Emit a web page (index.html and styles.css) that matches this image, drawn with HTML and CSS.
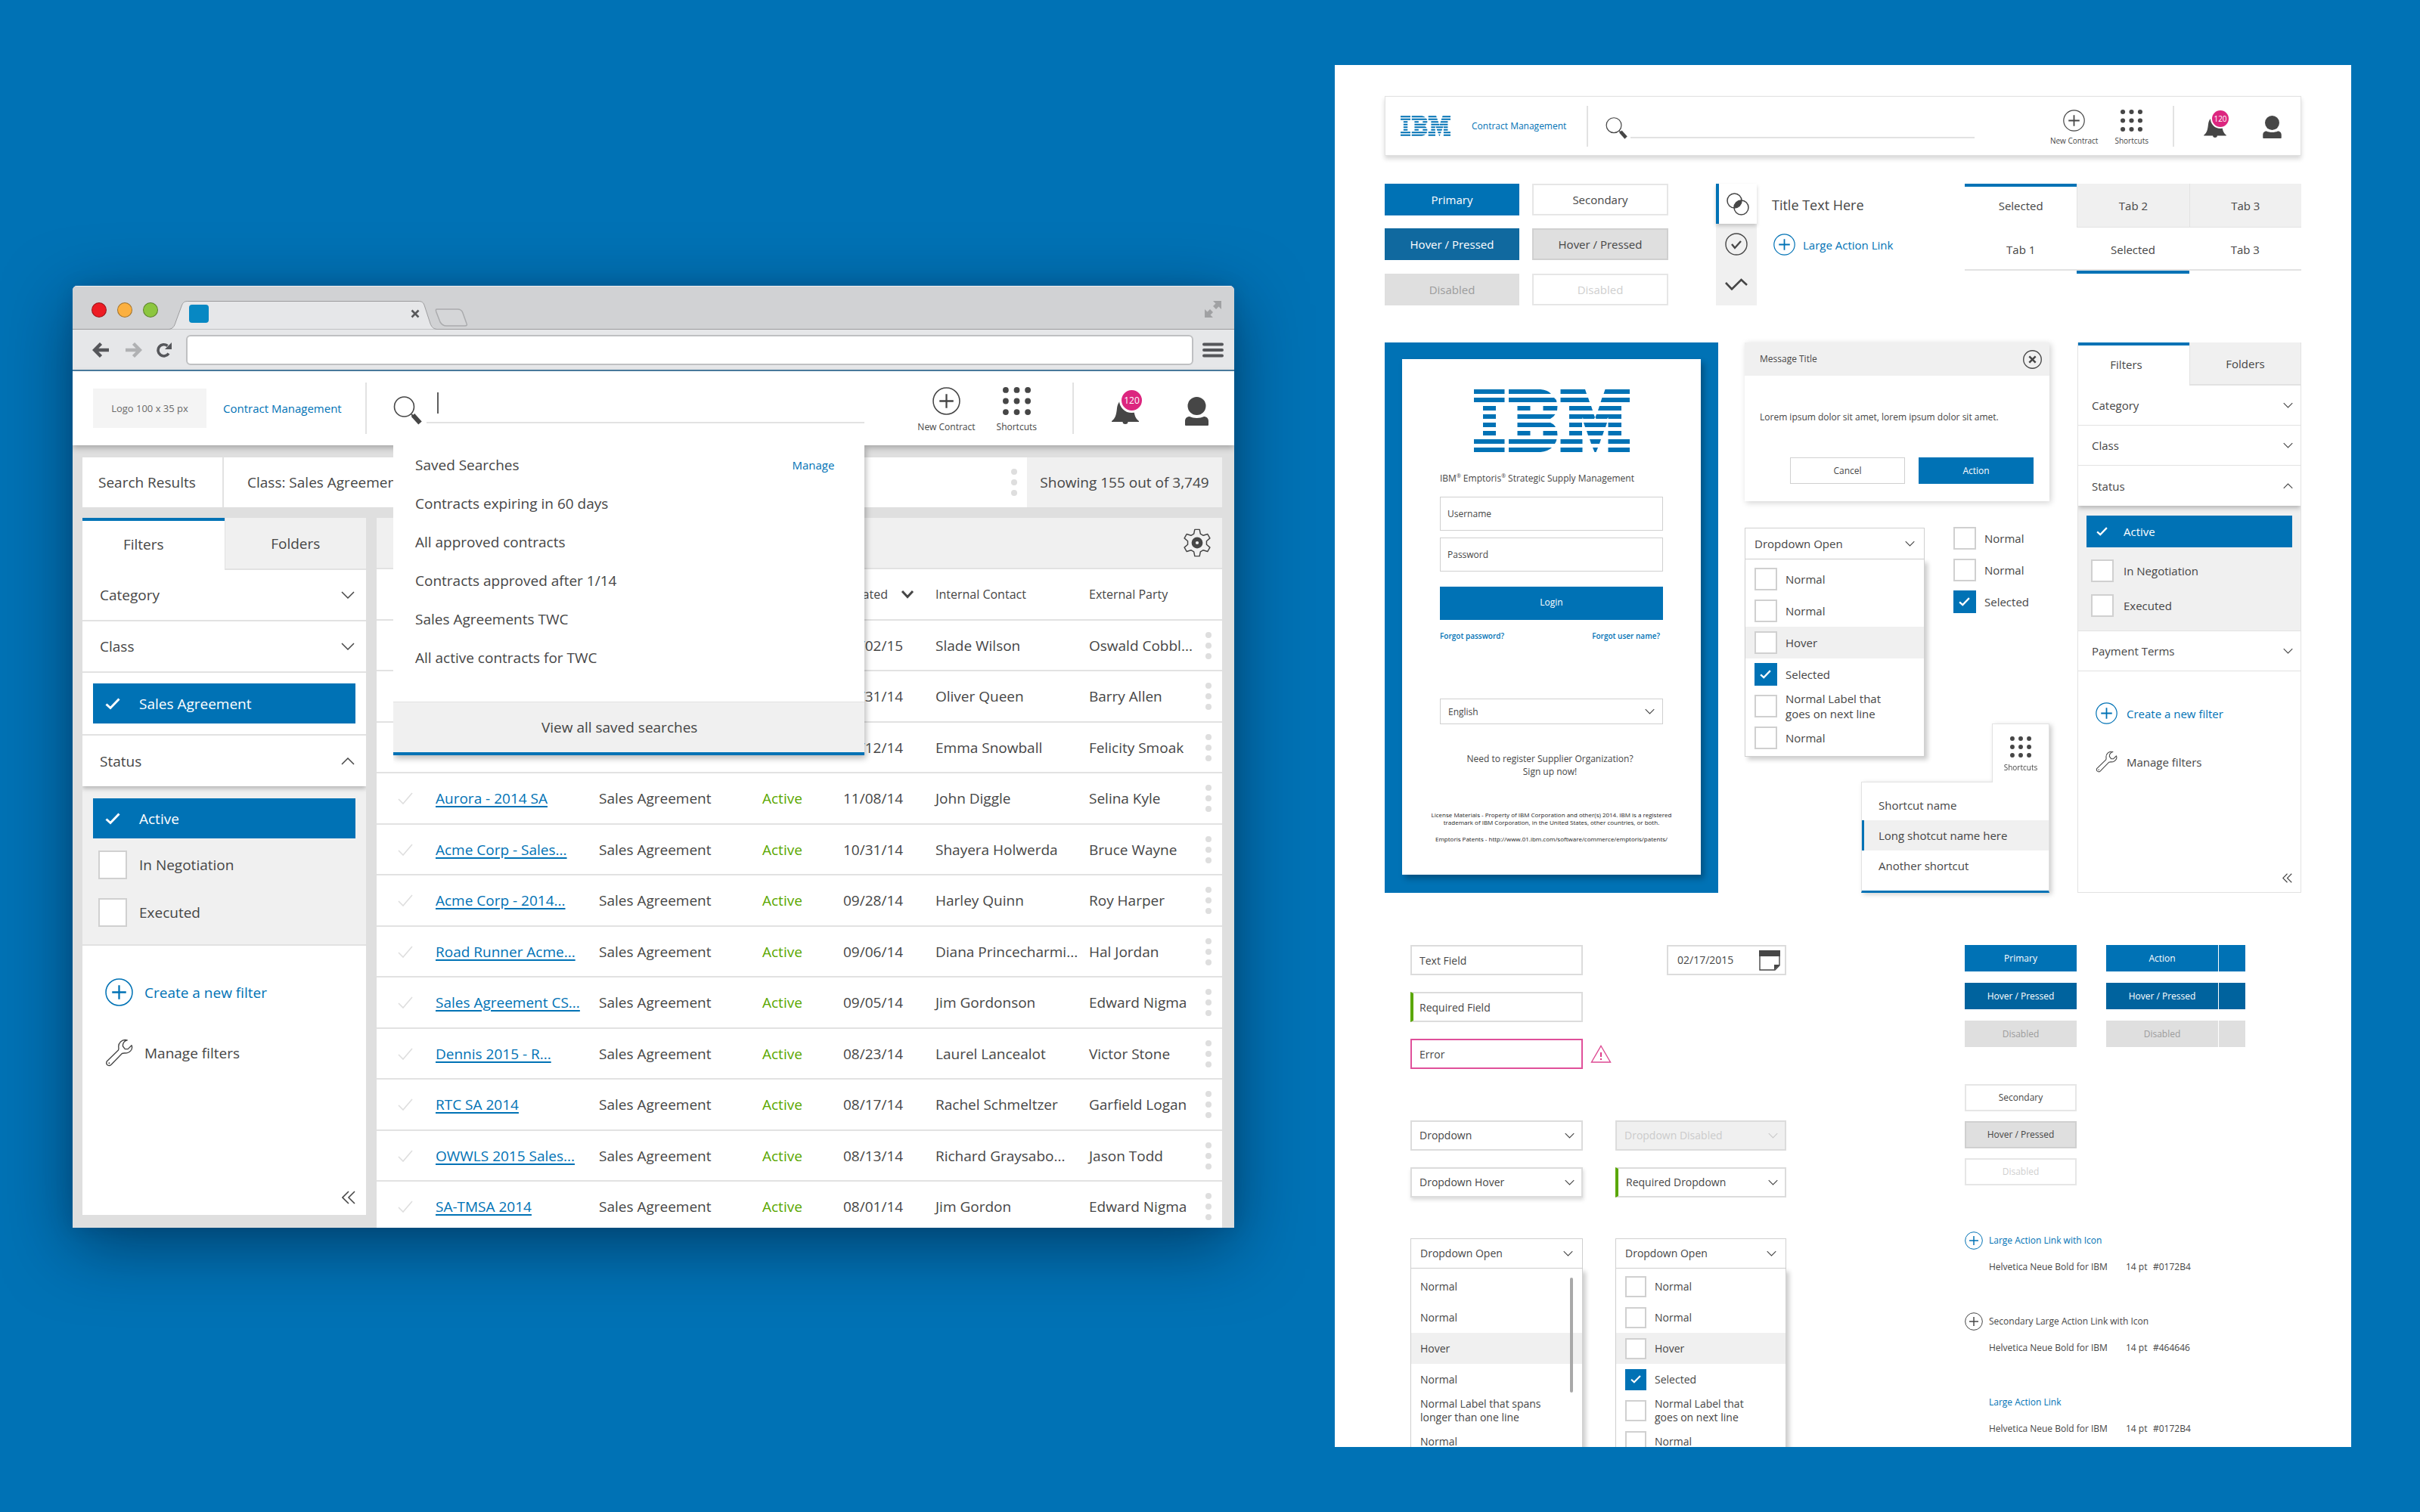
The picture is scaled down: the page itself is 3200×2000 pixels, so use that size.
FILE: index.html
```html
<!DOCTYPE html>
<html lang="en">
<head>
<meta charset="utf-8">
<title>Contract Management UI kit</title>
<link rel="stylesheet" href="styles.css">
</head>
<body>
<svg class="defs" aria-hidden="true">
  <symbol id="i-plus" viewBox="0 0 36 36"><circle cx="18" cy="18" r="17" fill="none" stroke="currentColor" stroke-width="1.5"/><path d="M18 9v18M9 18h18" fill="none" stroke="currentColor" stroke-width="2.2"/></symbol>
  <symbol id="i-grid" viewBox="0 0 38 38"><g fill="currentColor"><circle cx="4" cy="4" r="4"/><circle cx="19" cy="4" r="4"/><circle cx="34" cy="4" r="4"/><circle cx="4" cy="19" r="4"/><circle cx="19" cy="19" r="4"/><circle cx="34" cy="19" r="4"/><circle cx="4" cy="34" r="4"/><circle cx="19" cy="34" r="4"/><circle cx="34" cy="34" r="4"/></g></symbol>
  <symbol id="i-search" viewBox="0 0 38 38"><circle cx="14.500" cy="14" r="13" fill="none" stroke="currentColor" stroke-width="1.6"/><path d="M24 24l3 3" stroke="currentColor" stroke-width="2"/><path d="M26 25l9.500 10.500" stroke="currentColor" stroke-width="6"/></symbol>
  <symbol id="i-bell" viewBox="0 0 36 34"><path fill="currentColor" d="M0 30C5 26 6 22 7 13C8 5 12 1 18 1S28 5 29 13C30 22 31 26 36 30V31H21.500a3.500 3 0 0 1-7 0H0Z"/></symbol>
  <symbol id="i-user" viewBox="0 0 31 38"><ellipse cx="15.500" cy="12" rx="12" ry="12" fill="currentColor"/><path fill="currentColor" d="M0 37V32c0-4 3-6 6-6c5 2.500 14 2.500 19 0c3 0 6 2 6 6v5a1 1 0 0 1-1 1H1a1 1 0 0 1-1-1Z"/></symbol>
  <symbol id="i-down" viewBox="0 0 18 10"><path d="M1 1l8 8l8-8" fill="none" stroke="currentColor" stroke-width="1.5"/></symbol>
  <symbol id="i-up" viewBox="0 0 18 10"><path d="M1 9l8-8l8 8" fill="none" stroke="currentColor" stroke-width="1.5"/></symbol>
  <symbol id="i-collapse" viewBox="0 0 18 18"><path d="M9 1L1 9l8 8M17 1L9 9l8 8" fill="none" stroke="currentColor" stroke-width="1.6"/></symbol>
  <symbol id="i-tick" viewBox="0 0 20 16"><path d="M1 9l6 6L19 1" fill="none" stroke="currentColor" stroke-width="1.6"/></symbol>
  <symbol id="i-wrench" viewBox="0 0 38 38"><path d="M30 2C26 3 24 6 24 10L27 14h4L36 9C38 14 34 20 26 19.500L23 20L8 35.500C5 38 0 35 2.500 30.500L18 15.500L18.500 13C17 6 23 0 30 2Z" fill="none" stroke="currentColor" stroke-width="1.4" stroke-linejoin="round"/><circle cx="5.500" cy="33" r="1" fill="currentColor"/></symbol>
  <symbol id="i-gear" viewBox="-18 -18 36 36"><path d="M-3-16.700L3-16.700L4.100-11.300L7.700-9.200L13-10.900L16-5.800L11.800-2.100V2.100L16 5.800L13 10.900L7.700 9.200L4.100 11.300L3 16.700H-3L-4.100 11.300L-7.700 9.200L-13 10.900L-16 5.800L-11.800 2.100V-2.100L-16-5.800L-13-10.900L-7.700-9.200L-4.100-11.300Z" fill="none" stroke="currentColor" stroke-width="1.4" stroke-linejoin="round"/><circle r="4.500" fill="none" stroke="currentColor" stroke-width="5"/></symbol>
  <symbol id="i-more" viewBox="0 0 8 36"><g fill="#dedede"><circle cx="4" cy="4" r="4"/><circle cx="4" cy="18" r="4"/><circle cx="4" cy="32" r="4"/></g></symbol>
  <symbol id="i-venn" viewBox="0 0 30 30"><g fill="none" stroke="currentColor" stroke-width="1.500"><circle cx="10.500" cy="10.500" r="9.500"/><circle cx="19.500" cy="19.500" r="9.500"/></g><path fill="currentColor" d="M19.800 10.100A9.500 9.500 0 0 1 10.200 19.800A9.500 9.500 0 0 1 19.800 10.100Z"/></symbol>
  <symbol id="i-okay" viewBox="0 0 30 30"><circle cx="15" cy="15" r="14" fill="none" stroke="currentColor" stroke-width="1.400"/><path d="M9 15l4 5l8-9" fill="none" stroke="currentColor" stroke-width="2.400"/></symbol>
  <symbol id="i-trend" viewBox="0 0 30 16"><path d="M1 6l8 8.500L21.500 2L29 9" fill="none" stroke="currentColor" stroke-width="2.600"/></symbol>
  <symbol id="i-close" viewBox="0 0 24 24"><circle cx="12" cy="12" r="11.300" fill="none" stroke="currentColor" stroke-width="1.300"/><path d="M8 8l8 8M16 8l-8 8" fill="none" stroke="currentColor" stroke-width="2.400"/></symbol>
  <symbol id="i-ibm" viewBox="0 0 206 83"><path fill="#0072b5" d="M0 0H40.500V6H0ZM0 11H40.500V17H0ZM12 22H29V28H12ZM12 33H29V39H12ZM12 44H29V50H12ZM12 55H29V61H12ZM0 66H40.500V72H0ZM0 77H40.500V83H0Z
    M46 0H88Q98 1 102 6H46ZM46 11H106Q109 13 109.500 17H46ZM57.500 22H74.500V28H57.500ZM91.500 22H110.500L110 28H91.500ZM57.500 33H107.500Q106 36 101 39H57.500ZM57.500 44H101Q106 46 108 50H57.500ZM57.500 55H74.500V61H57.500ZM91.500 55H110L110.500 61H91.500ZM46 66H109.500Q109 69 107 72H46ZM46 77H103Q98 82 88 83H46Z
    M114.500 0H147L149 6H114.500ZM114.500 11H151L153 17H114.500ZM126 22H155L157 28H126ZM126 33H158.500L160 37L159 39H144.500L143.500 37V39H126ZM126 44H143V50H126ZM126 55H143V61H126ZM114.500 66H143.500V72H114.500ZM114.500 77H143.500V83H114.500Z
    M206 0H173.500L171.500 6H206ZM206 11H169.500L167.500 17H206ZM195 22H166L164 28H195ZM195 33H162L160.500 37L161.500 39H176L177.500 37V39H195ZM195 44H177.500V50H195ZM195 55H177.500V61H195ZM206 66H177.500V72H206ZM206 77H177.500V83H206Z
    M145 44H176L174 50H147ZM149 55H172L170 61H151ZM153 66H168L166 72H155ZM157 77H164L161.500 83H159.500Z"/></symbol>
</svg>

<main class="stage">
  <section class="window" aria-label="Contract search">
    <div class="tabstrip">
      <div class="lights"><i class="light light-red"></i><i class="light light-amber"></i><i class="light light-green"></i></div>
      <div class="browser-tab">
        <svg class="tab-shape" viewBox="0 0 354 38" width="354" height="38"><path d="M0 37.500C6 36 7 32 9 26L16 7C18 1.500 20 .5 25 .5H329C334 .5 336 2 337.500 7L345 30C347 35 349 37 354 37.500" fill="#e6e7e9" stroke="#9c9c9e"/></svg>
        <div class="tab-content"><i class="favicon"></i><button class="tab-close" aria-label="Close tab"><svg width="12" height="12" viewBox="0 0 12 12"><path d="M1.500 1.500l9 9M10.500 1.500l-9 9" stroke="#58595b" stroke-width="2.600"/></svg></button></div>
      </div>
      <svg class="new-tab" viewBox="0 0 44 24" width="44" height="24"><path d="M3 1H30C34 1 36 3 37 6L42 20C43 22 42 23 40 23H15C11 23 9 21 7 18L2 5C1 2 1 1 3 1Z" fill="#d5d6d8" stroke="#aaabad" stroke-width="1.500"/></svg>
      <svg class="fullscreen" viewBox="0 0 24 24" width="24" height="24"><path fill="#a0a1a3" d="M12 1H23V12L19.500 8.500L16 12L12 8L15.500 4.500ZM12 23H1V12L4.500 15.500L8 12L12 16L8.500 19.500Z"/></svg>
    </div>
    <div class="toolbar">
      <button class="nav-btn" aria-label="Back"><svg width="24" height="20" viewBox="0 0 24 20"><path d="M22 10H3M11.500 1.500L3 10l8.500 8.500" fill="none" stroke="#55565a" stroke-width="4.400"/></svg></button>
      <button class="nav-btn" aria-label="Forward"><svg width="24" height="20" viewBox="0 0 24 20"><path d="M2 10H21M12.500 1.500L21 10l-8.500 8.500" fill="none" stroke="#b0b1b3" stroke-width="4.400"/></svg></button>
      <button class="nav-btn" aria-label="Reload"><svg width="22" height="20" viewBox="0 0 22 20"><path d="M17 14.500A7.600 7.600 0 1 1 15.500 4.500" fill="none" stroke="#55565a" stroke-width="3.600"/><path d="M21 0V9H12Z" fill="#55565a"/></svg></button>
      <input class="address" type="text" aria-label="Address">
      <button class="nav-btn" aria-label="Menu"><svg width="28" height="20" viewBox="0 0 28 20"><path d="M2 2.500H26M2 10H26M2 17.500H26" stroke="#55565a" stroke-width="4" stroke-linecap="round"/></svg></button>
    </div>

    <header class="appbar">
      <div class="brand"><span class="logo-box">Logo 100 x 35 px</span><a href="#" class="product">Contract Management</a></div>
      <div class="search">
        <svg class="search-icon"><use href="#i-search"/></svg>
        <span class="search-field"><i class="caret"></i><input type="text" aria-label="Search contracts"></span>
        <div class="saved">
          <div class="saved-list">
            <div class="saved-head"><span>Saved Searches</span><a href="#">Manage</a></div>
            <a href="#">Contracts expiring in 60 days</a>
            <a href="#">All approved contracts</a>
            <a href="#">Contracts approved after 1/14</a>
            <a href="#">Sales Agreements TWC</a>
            <a href="#">All active contracts for TWC</a>
          </div>
          <a href="#" class="saved-all">View all saved searches</a>
        </div>
      </div>
      <nav class="actions">
        <button class="action"><svg class="plus"><use href="#i-plus"/></svg>New Contract</button>
        <button class="action"><svg class="dots"><use href="#i-grid"/></svg>Shortcuts</button>
      </nav>
      <div class="account">
        <button class="bell" aria-label="Notifications"><svg><use href="#i-bell"/></svg><span class="badge">120</span></button>
        <button class="user" aria-label="Profile"><svg><use href="#i-user"/></svg></button>
      </div>
    </header>

    <div class="workspace">
      <div class="crumbs">
        <span class="crumb">Search Results</span>
        <span class="crumb crumb-wide">Class: Sales Agreement</span>
        <svg class="more"><use href="#i-more"/></svg>
        <span class="count">Showing 155 out of 3,749</span>
      </div>
      <div class="panes">
        <aside class="filters">
          <div class="ftabs"><button class="ftab selected">Filters</button><button class="ftab">Folders</button></div>
          <button class="acc">Category<svg class="chev"><use href="#i-down"/></svg></button>
          <button class="acc">Class<svg class="chev"><use href="#i-down"/></svg></button>
          <div class="picked"><label class="opt on"><input type="checkbox" class="cb" checked>Sales Agreement</label></div>
          <button class="acc open">Status<svg class="chev"><use href="#i-up"/></svg></button>
          <div class="opts">
            <label class="opt on"><input type="checkbox" class="cb" checked>Active</label>
            <label class="opt"><input type="checkbox" class="cb">In Negotiation</label>
            <label class="opt"><input type="checkbox" class="cb">Executed</label>
          </div>
          <div class="flinks">
            <a href="#" class="iconlink blue"><svg><use href="#i-plus"/></svg>Create a new filter</a>
            <a href="#" class="iconlink"><svg><use href="#i-wrench"/></svg>Manage filters</a>
          </div>
          <button class="collapse" aria-label="Collapse"><svg><use href="#i-collapse"/></svg></button>
        </aside>
        <div class="results">
          <div class="results-bar"><button aria-label="Settings"><svg class="gear"><use href="#i-gear"/></svg></button></div>
          <table class="grid">
            <colgroup><col class="c-tick"><col class="c-name"><col class="c-type"><col class="c-status"><col class="c-date"><col class="c-contact"><col class="c-party"><col class="c-more"></colgroup>
            <thead><tr><th></th><th></th><th></th><th></th><th><span class="sort">Created<svg width="18" height="12" viewBox="0 0 18 12"><path d="M2 2l7 7.500L16 2" fill="none" stroke="#464646" stroke-width="3"/></svg></span></th><th>Internal Contact</th><th>External Party</th><th></th></tr></thead>
            <tbody>
              <tr><td></td><td></td><td></td><td></td><td>01/02/15</td><td>Slade Wilson</td><td>Oswald Cobbl...</td><td><svg class="more"><use href="#i-more"/></svg></td></tr>
              <tr><td></td><td></td><td></td><td></td><td>12/31/14</td><td>Oliver Queen</td><td>Barry Allen</td><td><svg class="more"><use href="#i-more"/></svg></td></tr>
              <tr><td></td><td></td><td></td><td></td><td>12/12/14</td><td>Emma Snowball</td><td>Felicity Smoak</td><td><svg class="more"><use href="#i-more"/></svg></td></tr>
              <tr><td><svg class="tick"><use href="#i-tick"/></svg></td><td><a href="#">Aurora - 2014 SA</a></td><td>Sales Agreement</td><td class="live">Active</td><td>11/08/14</td><td>John Diggle</td><td>Selina Kyle</td><td><svg class="more"><use href="#i-more"/></svg></td></tr>
              <tr><td><svg class="tick"><use href="#i-tick"/></svg></td><td><a href="#">Acme Corp - Sales...</a></td><td>Sales Agreement</td><td class="live">Active</td><td>10/31/14</td><td>Shayera Holwerda</td><td>Bruce Wayne</td><td><svg class="more"><use href="#i-more"/></svg></td></tr>
              <tr><td><svg class="tick"><use href="#i-tick"/></svg></td><td><a href="#">Acme Corp - 2014...</a></td><td>Sales Agreement</td><td class="live">Active</td><td>09/28/14</td><td>Harley Quinn</td><td>Roy Harper</td><td><svg class="more"><use href="#i-more"/></svg></td></tr>
              <tr><td><svg class="tick"><use href="#i-tick"/></svg></td><td><a href="#">Road Runner Acme...</a></td><td>Sales Agreement</td><td class="live">Active</td><td>09/06/14</td><td>Diana Princecharmi...</td><td>Hal Jordan</td><td><svg class="more"><use href="#i-more"/></svg></td></tr>
              <tr><td><svg class="tick"><use href="#i-tick"/></svg></td><td><a href="#">Sales Agreement CS...</a></td><td>Sales Agreement</td><td class="live">Active</td><td>09/05/14</td><td>Jim Gordonson</td><td>Edward Nigma</td><td><svg class="more"><use href="#i-more"/></svg></td></tr>
              <tr><td><svg class="tick"><use href="#i-tick"/></svg></td><td><a href="#">Dennis 2015 - R...</a></td><td>Sales Agreement</td><td class="live">Active</td><td>08/23/14</td><td>Laurel Lancealot</td><td>Victor Stone</td><td><svg class="more"><use href="#i-more"/></svg></td></tr>
              <tr><td><svg class="tick"><use href="#i-tick"/></svg></td><td><a href="#">RTC SA 2014</a></td><td>Sales Agreement</td><td class="live">Active</td><td>08/17/14</td><td>Rachel Schmeltzer</td><td>Garfield Logan</td><td><svg class="more"><use href="#i-more"/></svg></td></tr>
              <tr><td><svg class="tick"><use href="#i-tick"/></svg></td><td><a href="#">OWWLS 2015 Sales...</a></td><td>Sales Agreement</td><td class="live">Active</td><td>08/13/14</td><td>Richard Graysabo...</td><td>Jason Todd</td><td><svg class="more"><use href="#i-more"/></svg></td></tr>
              <tr><td><svg class="tick"><use href="#i-tick"/></svg></td><td><a href="#">SA-TMSA 2014</a></td><td>Sales Agreement</td><td class="live">Active</td><td>08/01/14</td><td>Jim Gordon</td><td>Edward Nigma</td><td><svg class="more"><use href="#i-more"/></svg></td></tr>
            </tbody>
          </table>
        </div>
      </div>
    </div>
  </section>

  <section class="sheet" aria-label="Components">
    <header class="appbar small">
      <div class="brand"><svg class="ibm-mark"><use href="#i-ibm"/></svg><a href="#" class="product">Contract Management</a></div>
      <div class="search">
        <svg class="search-icon"><use href="#i-search"/></svg>
        <span class="search-field"><input type="text" aria-label="Search"></span>
      </div>
      <nav class="actions">
        <button class="action"><svg class="plus"><use href="#i-plus"/></svg>New Contract</button>
        <button class="action"><svg class="dots"><use href="#i-grid"/></svg>Shortcuts</button>
      </nav>
      <div class="account">
        <button class="bell" aria-label="Notifications"><svg><use href="#i-bell"/></svg><span class="badge">120</span></button>
        <button class="user" aria-label="Profile"><svg><use href="#i-user"/></svg></button>
      </div>
    </header>

    <div class="row-basics">
      <div class="buttons">
        <button class="btn primary">Primary</button><button class="btn secondary">Secondary</button>
        <button class="btn primary hover">Hover / Pressed</button><button class="btn secondary hover">Hover / Pressed</button>
        <button class="btn primary" disabled>Disabled</button><button class="btn secondary" disabled>Disabled</button>
      </div>
      <div class="titles">
        <div class="rail">
          <button class="rail-item selected" aria-label="Compare"><svg><use href="#i-venn"/></svg></button>
          <button class="rail-item" aria-label="Approve"><svg><use href="#i-okay"/></svg></button>
          <button class="rail-item" aria-label="Trend"><svg class="flat"><use href="#i-trend"/></svg></button>
        </div>
        <div class="title-text"><h2>Title Text Here</h2><a href="#" class="iconlink blue"><svg><use href="#i-plus"/></svg>Large Action Link</a></div>
      </div>
      <div class="tabsets">
        <div class="tabs top"><button class="selected">Selected</button><button>Tab 2</button><button>Tab 3</button></div>
        <div class="tabs under"><button>Tab 1</button><button class="selected">Selected</button><button>Tab 3</button></div>
      </div>
    </div>

    <div class="row-panels">
      <div class="login-frame">
        <form class="login">
          <svg class="ibm-logo"><use href="#i-ibm"/></svg>
          <h2>IBM<sup>®</sup> Emptoris<sup>®</sup> Strategic Supply Management</h2>
          <input class="login-field" type="text" placeholder="Username" aria-label="Username">
          <input class="login-field" type="password" placeholder="Password" aria-label="Password">
          <button type="button" class="login-btn">Login</button>
          <div class="forgot"><a href="#">Forgot password?</a><a href="#">Forgot user name?</a></div>
          <span class="select lang"><select aria-label="Language"><option>English</option></select><svg class="chev"><use href="#i-down"/></svg></span>
          <p class="signup">Need to register Supplier Organization?<br>Sign up now!</p>
          <p class="legal">License Materials - Property of IBM Corporation and other(s) 2014. IBM is a registered<br>trademark of IBM Corporation, in the United States, other countries, or both.</p>
          <p class="legal">Emptoris Patents - http://www.01.ibm.com/software/commerce/emptoris/patents/</p>
        </form>
      </div>

      <div class="middle">
        <div class="dialog">
          <div class="dialog-head"><span>Message Title</span><button aria-label="Close"><svg><use href="#i-close"/></svg></button></div>
          <p>Lorem ipsum dolor sit amet, lorem ipsum dolor sit amet.</p>
          <div class="dialog-foot"><button class="btn secondary">Cancel</button><button class="btn primary">Action</button></div>
        </div>
        <div class="pickers">
          <div class="menu">
            <button class="menu-head">Dropdown Open<svg class="chev"><use href="#i-down"/></svg></button>
            <div class="menu-list">
              <label class="mi"><input type="checkbox" class="cb">Normal</label>
              <label class="mi"><input type="checkbox" class="cb">Normal</label>
              <label class="mi hover"><input type="checkbox" class="cb">Hover</label>
              <label class="mi"><input type="checkbox" class="cb" checked>Selected</label>
              <label class="mi"><input type="checkbox" class="cb"><span>Normal Label that<br>goes on next line</span></label>
              <label class="mi"><input type="checkbox" class="cb">Normal</label>
            </div>
          </div>
          <div class="checks">
            <label class="mi"><input type="checkbox" class="cb">Normal</label>
            <label class="mi"><input type="checkbox" class="cb">Normal</label>
            <label class="mi"><input type="checkbox" class="cb" checked>Selected</label>
          </div>
        </div>
        <div class="shortcuts">
          <button class="shortcuts-tab"><svg><use href="#i-grid"/></svg>Shortcuts</button>
          <div class="shortcuts-list"><a href="#">Shortcut name</a><a href="#" class="current">Long shotcut name here</a><a href="#">Another shortcut</a></div>
        </div>
      </div>

      <aside class="filters compact">
        <div class="ftabs"><button class="ftab selected">Filters</button><button class="ftab">Folders</button></div>
        <button class="acc">Category<svg class="chev"><use href="#i-down"/></svg></button>
        <button class="acc">Class<svg class="chev"><use href="#i-down"/></svg></button>
        <button class="acc open">Status<svg class="chev"><use href="#i-up"/></svg></button>
        <div class="opts">
          <label class="opt on"><input type="checkbox" class="cb" checked>Active</label>
          <label class="opt"><input type="checkbox" class="cb">In Negotiation</label>
          <label class="opt"><input type="checkbox" class="cb">Executed</label>
        </div>
        <button class="acc">Payment Terms<svg class="chev"><use href="#i-down"/></svg></button>
        <div class="flinks">
          <a href="#" class="iconlink blue"><svg><use href="#i-plus"/></svg>Create a new filter</a>
          <a href="#" class="iconlink"><svg><use href="#i-wrench"/></svg>Manage filters</a>
        </div>
        <button class="collapse" aria-label="Collapse"><svg><use href="#i-collapse"/></svg></button>
      </aside>
    </div>

    <div class="row-forms">
      <div class="forms">
        <div class="fields">
          <input class="field" type="text" value="Text Field" aria-label="Text field">
          <span class="date"><input type="text" value="02/17/2015" aria-label="Date"><svg width="28" height="27" viewBox="0 0 28 27"><path d="M1 1H27V20L21 26H1Z" fill="#fff" stroke="#464646" stroke-width="1.400"/><path d="M0 0H28V8H0Z" fill="#464646"/><path d="M20 26V19H27.500Z" fill="#464646"/></svg></span>
          <input class="field required" type="text" value="Required Field" aria-label="Required field">
          <span></span>
          <input class="field error" type="text" value="Error" aria-label="Field with error">
          <svg class="warn" width="28" height="24" viewBox="0 0 28 24"><path d="M14 1.500L26.500 23H1.500Z" fill="none" stroke="#dd4a93" stroke-width="1.400"/><path d="M14 10v6M14 18v2" stroke="#dc267f" stroke-width="1.800"/></svg>
        </div>
        <div class="selects">
          <span class="select"><select aria-label="Dropdown"><option>Dropdown</option></select><svg class="chev"><use href="#i-down"/></svg></span>
          <span class="select off"><select aria-label="Disabled dropdown" disabled><option>Dropdown Disabled</option></select><svg class="chev"><use href="#i-down"/></svg></span>
          <span class="select raised"><select aria-label="Hovered dropdown"><option>Dropdown Hover</option></select><svg class="chev"><use href="#i-down"/></svg></span>
          <span class="select required"><select aria-label="Required dropdown"><option>Required Dropdown</option></select><svg class="chev"><use href="#i-down"/></svg></span>
        </div>
        <div class="menus">
          <div class="menu">
            <button class="menu-head">Dropdown Open<svg class="chev"><use href="#i-down"/></svg></button>
            <div class="menu-list scrolls">
              <a href="#" class="mi">Normal</a>
              <a href="#" class="mi">Normal</a>
              <a href="#" class="mi hover">Hover</a>
              <a href="#" class="mi">Normal</a>
              <a href="#" class="mi">Normal Label that spans<br>longer than one line</a>
              <a href="#" class="mi">Normal</a>
            </div>
          </div>
          <div class="menu">
            <button class="menu-head">Dropdown Open<svg class="chev"><use href="#i-down"/></svg></button>
            <div class="menu-list">
              <label class="mi"><input type="checkbox" class="cb">Normal</label>
              <label class="mi"><input type="checkbox" class="cb">Normal</label>
              <label class="mi hover"><input type="checkbox" class="cb">Hover</label>
              <label class="mi"><input type="checkbox" class="cb" checked>Selected</label>
              <label class="mi"><input type="checkbox" class="cb"><span>Normal Label that<br>goes on next line</span></label>
              <label class="mi"><input type="checkbox" class="cb">Normal</label>
            </div>
          </div>
        </div>
      </div>

      <div class="specs">
        <div class="spec-buttons">
          <div class="stack">
            <button class="btn primary">Primary</button>
            <button class="btn primary dark">Hover / Pressed</button>
            <button class="btn primary" disabled>Disabled</button>
          </div>
          <div class="stack">
            <div class="split"><button class="btn primary">Action</button><button class="btn primary" aria-label="More"></button></div>
            <div class="split"><button class="btn primary dark">Hover / Pressed</button><button class="btn primary dark" aria-label="More"></button></div>
            <div class="split"><button class="btn primary" disabled>Disabled</button><button class="btn primary" disabled aria-label="More"></button></div>
          </div>
        </div>
        <div class="stack second">
          <button class="btn secondary">Secondary</button>
          <button class="btn secondary hover">Hover / Pressed</button>
          <button class="btn secondary" disabled>Disabled</button>
        </div>
        <div class="links">
          <div class="spec"><svg class="blue"><use href="#i-plus"/></svg><a href="#" class="blue">Large Action Link with Icon</a><p><span>Helvetica Neue Bold for IBM</span><span>14 pt</span><span>#0172B4</span></p></div>
          <div class="spec"><svg><use href="#i-plus"/></svg><a href="#">Secondary Large Action Link with Icon</a><p><span>Helvetica Neue Bold for IBM</span><span>14 pt</span><span>#464646</span></p></div>
          <div class="spec"><a href="#" class="blue">Large Action Link</a><p><span>Helvetica Neue Bold for IBM</span><span>14 pt</span><span>#0172B4</span></p></div>
        </div>
      </div>
    </div>
  </section>
</main>
</body>
</html>
```
FILE: styles.css
```css
:root {
  --blue: #0072b5;
  --blue-hover: #10699f;
  --blue-dark: #00639e;
  --ink: #464646;
  --line: #e2e2e2;
  --edge: #d0d0d0;
  --soft: #f0f0f0;
  --mid: #dfdfdf;
  --green: #5aa700;
  --pink: #dc267f;
}

* { box-sizing: border-box; }

body {
  margin: 0;
  height: 100vh;
  overflow: hidden;
  padding: 86px 0;
  background: var(--blue);
  color: var(--ink);
  font-family: "Open Sans", "Noto Sans", sans-serif;
  font-size: 15px;
  line-height: 20px;
}

button, input, select { font: inherit; color: inherit; }
button { margin: 0; padding: 0; border: 0; background: none; }
input, select { border-radius: 0; }
a { color: inherit; text-decoration: none; }
p, h2 { margin: 0; font-weight: 400; }
svg { display: block; flex: none; }
.defs { position: absolute; width: 0; height: 0; }
.blue { color: var(--blue); }

.stage {
  display: flex;
  justify-content: space-between;
  height: 100%;
  padding: 0 91px 0 96px;
}

/* Browser window */
.window {
  display: flex;
  flex-direction: column;
  align-self: center;
  width: 48vw;
  height: calc(100vh - 754px);
  margin-top: 2px;
  overflow: hidden;
  border-radius: 6px 6px 0 0;
  background: #fff;
  box-shadow: 0 24px 90px rgba(0, 15, 35, .5), 0 0 24px rgba(0, 15, 35, .1);
  font-size: 19px;
  line-height: 24px;
}

.tabstrip {
  display: flex;
  align-items: flex-end;
  flex: none;
  height: 58px;
  padding: 0 16px 0 25px;
  background: #d1d2d4;
  box-shadow: inset 0 1px #edeef0, inset 0 -1px #9c9c9e;
}
.lights { display: flex; gap: 14px; margin-bottom: 16px; }
.light { width: 20px; height: 20px; border: 1px solid rgba(0, 0, 0, .35); border-radius: 50%; }
.light-red { background: #ed1c24; }
.light-amber { background: #fbb040; }
.light-green { background: #8cc63f; }
.browser-tab { display: grid; margin-left: 15px; }
.browser-tab > * { grid-area: 1 / 1; }
.tab-content { display: flex; justify-content: space-between; align-items: center; padding: 0 23px 4px 26px; }
.favicon { width: 26px; height: 24px; border-radius: 4px; background: #0788c3; }
.new-tab { margin-bottom: 4px; margin-left: -3px; }
.fullscreen { margin: 0 0 15px auto; }

.toolbar {
  display: flex;
  align-items: center;
  gap: 18px;
  flex: none;
  height: 55px;
  padding: 0 14px 0 26px;
  border-bottom: 2px solid #4d7fa3;
  background: #e6e7e9;
}
.address {
  flex: 1;
  min-width: 0;
  height: 40px;
  margin: 0 -6px 0 0;
  border: 2px solid #bfc0c2;
  border-radius: 6px;
  background: #fff;
}

/* Application bar */
.appbar {
  display: flex;
  align-items: center;
  flex: none;
  position: relative;
  z-index: 2;
  height: 98px;
  background: #fff;
  box-shadow: 0 3px 8px rgba(0, 0, 0, .28);
}
.brand {
  display: flex;
  align-items: center;
  gap: 22px;
  width: 389px;
  height: 68px;
  padding-left: 27px;
  border-right: 2px solid var(--line);
}
.logo-box { padding: 14px 0; width: 150px; text-align: center; background: #f4f4f4; color: #6a6a6a; font-size: 13px; }
.product { color: var(--blue); font-size: 15px; font-weight: 500; white-space: nowrap; }
.search { display: flex; align-items: center; flex: 1; position: relative; align-self: stretch; margin-left: 35px; }
.search-icon { width: 38px; height: 38px; margin-top: 5px; }
.search-field { display: flex; align-items: center; align-self: flex-start; flex: 1; height: 69px; margin-left: 6px; padding: 16px 0 0 14px; border-bottom: 2px solid var(--line); }
.search-field input { flex: 1; min-width: 0; border: 0; outline: 0; background: none; }
.caret { width: 2px; height: 28px; background: #5d5d5d; }
.actions { display: flex; gap: 28px; margin-left: 70px; padding: 5px 47px 0 0; height: 68px; align-items: center; border-right: 2px solid var(--line); font-size: 12px; line-height: 16px; }
.action { display: flex; flex-direction: column; align-items: center; gap: 8px; white-space: nowrap; }
.plus { width: 37px; height: 37px; }
.dots { width: 37px; height: 37px; }
.account { display: flex; align-items: center; gap: 61px; padding: 8px 34px 0 50px; }
.bell { position: relative; width: 36px; }
.bell svg { width: 36px; height: 34px; }
.badge {
  position: absolute;
  left: 10px;
  top: -14px;
  width: 33px;
  height: 33px;
  border: 3px solid #fff;
  border-radius: 50%;
  background: var(--pink);
  color: #fff;
  font-size: 12px;
  line-height: 27px;
  text-align: center;
}
.user svg { width: 31px; height: 38px; }

.saved { position: absolute; left: 0; right: 0; top: 98px; background: #fff; border-bottom: 4px solid var(--blue); box-shadow: 2px 4px 8px rgba(0, 0, 0, .28); clip-path: inset(0 -16px -16px 0); }
.saved-list { display: flex; flex-direction: column; gap: 27px; padding: 14px 40px 46px 29px; }
.saved-head { display: flex; justify-content: space-between; }
.saved-head a { color: var(--blue); font-size: 15px; }
.saved-all { display: block; padding: 21px 46px 21px 21px; border-top: 1px solid var(--line); background: var(--soft); text-align: center; }

/* Workspace */
.workspace { display: flex; flex-direction: column; flex: 1; min-height: 0; padding: 16px 16px 0 13px; gap: 14px; background: var(--mid); }
.crumbs { display: flex; align-items: stretch; flex: none; height: 66px; background: #fff; }
.crumb { width: 187px; padding: 21px 0 21px 21px; border-right: 2px solid var(--line); white-space: nowrap; }
.crumb-wide { flex: 1; padding-left: 31px; border: 0; }
.more { width: 8px; height: 36px; }
.crumbs .more { align-self: center; margin-right: 13px; }
.count { width: 258px; padding: 21px 0; background: var(--soft); text-align: center; white-space: nowrap; }
.panes { display: flex; flex: 1; min-height: 0; gap: 14px; }

.filters { display: flex; flex-direction: column; width: 375px; margin-bottom: 17px; background: #fff; }
.ftabs { display: grid; grid-template-columns: 1fr 1fr; flex: none; height: 69px; }
.ftab { border-left: 1px solid var(--line); border-bottom: 2px solid var(--line); background: var(--soft); }
.ftab.selected { border: 0; border-top: 4px solid var(--blue); background: #fff; padding: 0 26px 4px 0; }
.acc { display: flex; justify-content: space-between; align-items: center; flex: none; height: 68px; padding: 0 15px 0 23px; border-bottom: 2px solid var(--line); text-align: left; }
.acc.open { position: relative; height: 67px; border: 0; box-shadow: 0 3px 6px rgba(0, 0, 0, .25); clip-path: inset(0 0 -12px 0); }
.chev { width: 18px; height: 10px; }
.picked { padding: 14px; border-bottom: 2px solid var(--line); }
.opts { display: flex; flex-direction: column; gap: 25px; padding: 16px 14px 23px; border-bottom: 2px solid var(--line); background: var(--soft); }
.opt { display: flex; align-items: center; gap: 16px; padding-left: 7px; }
.opt.on { height: 53px; background: var(--blue); color: #fff; }
.opts .opt.on { margin-bottom: -9px; }
.cb {
  appearance: none;
  flex: none;
  width: 38px;
  height: 38px;
  margin: 0;
  border: 2px solid var(--edge);
  background: #fff;
}
.cb:checked {
  border-color: var(--blue);
  background: var(--blue) url("data:image/svg+xml,%3Csvg xmlns='http://www.w3.org/2000/svg' viewBox='0 0 20 16'%3E%3Cpath d='M1.500 8.500l5.500 5L18.500 1.500' fill='none' stroke='white' stroke-width='3'/%3E%3C/svg%3E") center / 58% no-repeat;
}
.flinks { display: flex; flex-direction: column; gap: 43px; padding: 43px 30px; }
.iconlink { display: flex; align-items: center; gap: 15px; white-space: nowrap; }
.iconlink svg { width: 37px; height: 37px; }
.collapse { align-self: flex-end; margin: auto 14px 14px 0; }
.collapse svg { width: 18px; height: 18px; }

.results { flex: 1; min-width: 0; background: #fff; }
.results-bar { display: flex; justify-content: flex-end; align-items: center; height: 68px; padding-right: 14px; border-bottom: 2px solid var(--line); background: var(--soft); }
.gear { width: 38px; height: 38px; }
.grid { width: 100%; table-layout: fixed; border-collapse: collapse; white-space: nowrap; }
.grid th, .grid td { height: 67px; padding: 0; border-bottom: 2px solid var(--line); text-align: left; font-weight: 400; }
.grid tr:nth-child(even) td { height: 68px; }
.grid th { font-size: 16px; }
.grid td a { color: var(--blue); text-decoration: underline; text-decoration-thickness: 2px; text-underline-offset: 3px; }
.grid .more { margin-left: 6px; }
.sort { display: flex; align-items: center; gap: 17px; }
.c-tick { width: 78px; }
.c-name { width: 216px; }
.c-type { width: 216px; }
.c-status { width: 107px; }
.c-date { width: 122px; }
.c-contact { width: 203px; }
.c-more { width: 28px; }
.tick { width: 20px; height: 16px; margin-left: 28px; color: #dedede; }
.live { color: var(--green); }

/* Component sheet */
.sheet { width: 42vw; padding: 41px 66px 0; overflow: hidden; background: #fff; }

.small { height: 79px; border: 1px solid var(--line); box-shadow: 0 4px 6px rgba(0, 0, 0, .16); }
.small .brand { width: 268px; height: 54px; gap: 28px; padding-left: 20px; }
.ibm-mark { width: 66px; height: 27px; }
.small .product { font-size: 12px; }
.small .search { margin-left: 23px; }
.small .search-icon { width: 29px; height: 29px; }
.small .search-field { height: 55px; margin-left: 4px; padding: 0; }
.small .actions { height: 54px; margin-left: 100px; gap: 22px; padding: 4px 32px 0 0; font-size: 10px; line-height: 14px; }
.small .action { gap: 5px; }
.small .plus { width: 29px; height: 29px; }
.small .dots { width: 29px; height: 29px; }
.small .account { gap: 48px; padding: 3px 25px 0 39px; }
.small .bell { width: 30px; }
.small .bell svg { width: 30px; height: 28px; }
.small .badge { left: 9px; top: -10px; width: 26px; height: 26px; border-width: 2px; font-size: 10px; line-height: 22px; }
.small .user svg { width: 25px; height: 30px; }

.row-basics { display: flex; justify-content: space-between; margin-top: 37px; }
.buttons { display: grid; grid-template-columns: 178px 180px; gap: 17px; }
.btn { height: 42px; padding: 0; text-align: center; white-space: nowrap; }
.primary { background: var(--blue); color: #fff; }
.primary.hover { background: var(--blue-hover); }
.primary.dark { background: var(--blue-dark); }
.primary:disabled { background: var(--mid); color: #9c9c9c; }
.secondary { border: 2px solid #e6e6e6; background: #fff; color: var(--ink); }
.secondary.hover { border-color: var(--edge); background: var(--mid); }
.secondary:disabled { color: #cfcfcf; }
.titles { display: flex; gap: 20px; width: 266px; }
.rail { width: 54px; height: 161px; background: var(--soft); }
.rail-item { display: grid; place-items: center; width: 54px; height: 53px; }
.rail-item.selected { border-left: 4px solid var(--blue); background: #fff; box-shadow: 0 3px 5px rgba(0, 0, 0, .18); }
.rail-item svg { width: 30px; height: 30px; }
.rail-item .flat { height: 16px; }
.title-text h2 { padding-top: 16px; font-size: 18px; line-height: 24px; }
.title-text .iconlink { gap: 10px; margin: 26px 0 0 2px; }
.title-text .iconlink svg { width: 29px; height: 29px; }
.tabsets { width: 445px; }
.tabs { display: grid; grid-template-columns: 1fr 1fr 1fr; }
.tabs button { height: 58px; }
.top button { border-left: 1px solid var(--line); border-bottom: 1px solid var(--line); background: var(--soft); }
.top .selected { border: 0; border-top: 4px solid var(--blue); background: #fff; padding-bottom: 4px; }
.under button { height: 61px; border-bottom: 4px solid transparent; background: linear-gradient(var(--line), var(--line)) bottom / 100% 2px no-repeat; }
.under .selected { border-color: var(--blue); }

.row-panels { display: grid; grid-template-columns: 441px 405px 296px; justify-content: space-between; margin-top: 49px; }
.login-frame { padding: 22px 23px 23px; background: var(--blue); }
.login { display: flex; flex-direction: column; height: 682px; padding: 40px 50px 0; background: #fff; box-shadow: 4px 5px 8px rgba(0, 0, 0, .3); font-size: 12px; line-height: 17px; }
.ibm-logo { align-self: center; width: 206px; height: 83px; }
.login h2 { margin: 26px 0 16px; font-size: 12px; line-height: 17px; white-space: nowrap; }
.login sup { font-size: 7px; line-height: 0; }
.login-field { height: 45px; margin-bottom: 9px; padding: 0 9px; border: 1px solid var(--edge); background: #fff; }
.login-field::placeholder { color: var(--ink); opacity: 1; }
.login-btn { height: 44px; margin-top: 11px; padding-bottom: 3px; background: var(--blue); color: #fff; }
.forgot { display: flex; justify-content: space-between; margin-top: 13px; padding-right: 4px; color: var(--blue); font-size: 10px; font-weight: 600; }
.select { display: grid; align-items: center; }
.select > * { grid-area: 1 / 1; }
.select .chev { justify-self: end; margin-right: 11px; width: 13px; height: 8px; pointer-events: none; }
.select select { appearance: none; height: 40px; width: 100%; padding: 0 10px; border: 1px solid var(--edge); background: #fff; }
.lang { margin-top: 74px; }
.lang select { height: 34px; }
.signup { margin: 37px 4px 44px 0; text-align: center; }
.legal { margin: 0 -40px 12px; font-size: 8px; line-height: 10px; text-align: center; color: #222; white-space: nowrap; }

.middle { display: flex; flex-direction: column; width: 403px; }
.dialog { height: 210px; background: #fff; box-shadow: 2px 2px 8px rgba(0, 0, 0, .18); font-size: 12px; }
.dialog-head { display: flex; justify-content: space-between; align-items: center; height: 44px; padding: 0 10px 0 20px; background: var(--soft); }
.dialog-head svg { width: 25px; height: 25px; }
.dialog p { padding: 45px 20px 43px; }
.dialog-foot { display: flex; justify-content: flex-end; gap: 18px; padding-right: 21px; }
.dialog-foot .btn { width: 152px; height: 35px; }
.dialog-foot .secondary { border-width: 1px; border-color: var(--edge); }
.pickers { display: flex; gap: 38px; margin-top: 35px; }
.menu { width: 238px; }
.menu-head { display: flex; justify-content: space-between; align-items: center; width: 100%; height: 42px; padding: 0 12px; border: 1px solid var(--edge); background: #fff; }
.menu .chev { width: 13px; height: 8px; }
.menu-list { padding: 5px 0 3px; border: 1px solid var(--edge); border-top: 0; background: #fff; box-shadow: 4px 4px 6px rgba(0, 0, 0, .2); }
.mi { display: flex; align-items: center; gap: 11px; height: 42px; padding: 0 12px; }
.mi.hover { background: var(--soft); }
.mi .cb, .compact .cb { width: 30px; height: 30px; }
.checks .mi { padding: 0; }
.checks { margin-top: -7px; }
.shortcuts { display: flex; flex-direction: column; align-self: flex-end; width: 249px; margin-top: -44px; filter: drop-shadow(3px 2px 3px rgba(0, 0, 0, .2)); }
.shortcuts-tab { display: flex; flex-direction: column; align-items: center; gap: 6px; align-self: flex-end; width: 76px; height: 78px; margin-bottom: -1px; padding-top: 16px; border: 1px solid var(--line); border-bottom: 0; background: #fff; font-size: 10px; line-height: 14px; z-index: 1; }
.shortcuts-tab svg { width: 28px; height: 28px; }
.shortcuts-list { padding: 10px 0 13px; border: 1px solid var(--line); border-bottom: 3px solid var(--blue); background: #fff; }
.shortcuts-list a { display: block; padding: 10px 0 10px 22px; }
.shortcuts-list .current { padding-left: 19px; border-left: 3px solid var(--blue); background: var(--soft); }

.compact { width: auto; margin: 0; border: 1px solid var(--line); border-top: 0; }
.compact .ftabs { height: 57px; }
.compact .ftab.selected { padding-right: 20px; }
.compact .acc { height: 53px; padding: 0 10px 0 18px; border-width: 1px; }
.compact .chev { width: 13px; height: 8px; }
.compact .opts { gap: 16px; padding: 13px 11px 18px; border-width: 1px; }
.compact .opt { gap: 13px; padding-left: 6px; }
.compact .opt.on { height: 42px; margin-bottom: 0; }
.compact .flinks { gap: 35px; padding: 41px 23px; }
.compact .iconlink { gap: 12px; }
.compact .iconlink svg { width: 29px; height: 29px; }
.compact .collapse { margin: auto 11px 12px 0; }
.compact .collapse svg { width: 13px; height: 13px; }

.row-forms { display: flex; justify-content: space-between; margin-top: 69px; padding-left: 34px; }
.forms { width: 497px; font-size: 14px; line-height: 18px; }
.fields, .selects, .menus { display: grid; grid-template-columns: 228px 226px; column-gap: 43px; row-gap: 22px; }
.field { width: 228px; height: 40px; padding: 0 10px; border: 2px solid #dcdcdc; background: #fff; }
.required.field { border-left: 4px solid var(--green); padding-left: 8px; }
.error.field { border-color: #e0509a; }
.date { display: flex; align-items: center; justify-self: end; width: 158px; height: 40px; padding: 0 6px 0 12px; border: 2px solid #dcdcdc; }
.date input { flex: 1; min-width: 0; padding: 0; border: 0; background: none; }
.warn { align-self: center; margin-left: -33px; }
.selects { margin-top: 68px; }
.selects .select select { border-width: 2px; border-color: #dcdcdc; }
.off select { background: var(--soft) !important; color: #cbcbcb; opacity: 1; }
.off .chev { color: #cbcbcb; }
.raised { box-shadow: 1px 3px 5px rgba(0, 0, 0, .15); }
.required select { border-left: 4px solid var(--green) !important; }
.menus { margin-top: 54px; }
.menus .menu { width: auto; }
.menus .menu-head { height: 40px; }
.menus .mi { height: 41px; gap: 11px; }
.menus .cb { width: 28px; height: 28px; }
.menus .menu-list { padding: 3px 0; }
.scrolls { position: relative; }
.scrolls::after { content: ""; position: absolute; right: 12px; top: 12px; width: 4px; height: 152px; border-radius: 2px; background: #a9a9a9; }

.specs { width: 445px; font-size: 12px; line-height: 18px; }
.spec-buttons { display: flex; gap: 39px; }
.stack { display: flex; flex-direction: column; gap: 15px; }
.stack .btn { width: 148px; height: 35px; }
.split { display: flex; gap: 1px; }
.split .btn + .btn { width: 35px; }
.second { margin-top: 49px; gap: 13px; }
.second .btn { height: 36px; }
.links { display: flex; flex-direction: column; gap: 54px; margin-top: 64px; }
.spec { display: grid; grid-template-columns: 24px 1fr; column-gap: 8px; row-gap: 17px; align-items: center; }
.spec svg { width: 24px; height: 24px; margin: -3px 0; }
.spec a, .spec p { grid-column: 2; }
.spec a.blue { font-weight: 500; }
.spec p { display: grid; grid-template-columns: 181px 36px 1fr; }
```
